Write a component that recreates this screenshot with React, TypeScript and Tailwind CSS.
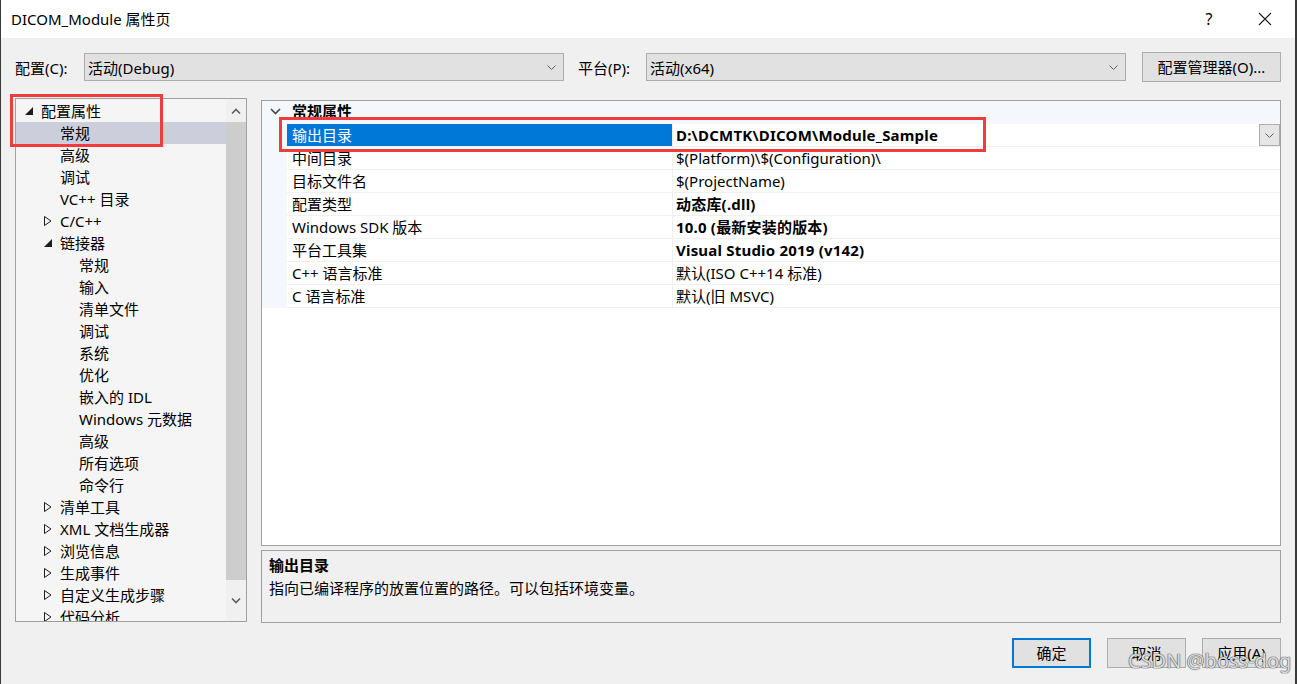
import React from "react";

const FONT = "font-['Noto_Sans','Noto_Sans_CJK_SC',sans-serif]";

function Chevron({ className = "" }: { className?: string }) {
  return (
    <svg width="9" height="5" viewBox="0 0 9 5" className={className}>
      <path d="M0.5 0.5 L4.5 4.5 L8.5 0.5" fill="none" stroke="#606060" strokeWidth="1" />
    </svg>
  );
}

function Expanded() {
  return (
    <svg width="8" height="8" viewBox="0 0 8 8">
      <polygon points="8,0 8,8 0,8" fill="#1e1e1e" />
    </svg>
  );
}

function Collapsed() {
  return (
    <svg width="8" height="10" viewBox="0 0 8 10">
      <polygon points="0.5,0.5 7,5 0.5,9.5" fill="none" stroke="#1e1e1e" strokeWidth="1" />
    </svg>
  );
}

type TreeItem = { label: string; level: 0 | 1 | 2; state?: "open" | "closed"; selected?: boolean };

const tree: TreeItem[] = [
  { label: "配置属性", level: 0, state: "open" },
  { label: "常规", level: 1, selected: true },
  { label: "高级", level: 1 },
  { label: "调试", level: 1 },
  { label: "VC++ 目录", level: 1 },
  { label: "C/C++", level: 1, state: "closed" },
  { label: "链接器", level: 1, state: "open" },
  { label: "常规", level: 2 },
  { label: "输入", level: 2 },
  { label: "清单文件", level: 2 },
  { label: "调试", level: 2 },
  { label: "系统", level: 2 },
  { label: "优化", level: 2 },
  { label: "嵌入的 IDL", level: 2 },
  { label: "Windows 元数据", level: 2 },
  { label: "高级", level: 2 },
  { label: "所有选项", level: 2 },
  { label: "命令行", level: 2 },
  { label: "清单工具", level: 1, state: "closed" },
  { label: "XML 文档生成器", level: 1, state: "closed" },
  { label: "浏览信息", level: 1, state: "closed" },
  { label: "生成事件", level: 1, state: "closed" },
  { label: "自定义生成步骤", level: 1, state: "closed" },
  { label: "代码分析", level: 1, state: "closed" },
];

const padClass: Record<number, string> = { 0: "pl-[9px]", 1: "pl-[28px]", 2: "pl-[47px]" };

type Prop = { name: string; value: string; bold?: boolean; selected?: boolean };
const props: Prop[] = [
  { name: "输出目录", value: "D:\\DCMTK\\DICOM\\Module_Sample", bold: true, selected: true },
  { name: "中间目录", value: "$(Platform)\\$(Configuration)\\" },
  { name: "目标文件名", value: "$(ProjectName)" },
  { name: "配置类型", value: "动态库(.dll)", bold: true },
  { name: "Windows SDK 版本", value: "10.0 (最新安装的版本)", bold: true },
  { name: "平台工具集", value: "Visual Studio 2019 (v142)", bold: true },
  { name: "C++ 语言标准", value: "默认(ISO C++14 标准)" },
  { name: "C 语言标准", value: "默认(旧 MSVC)" },
];

function Combo({ text, width }: { text: string; width: string }) {
  return (
    <div className={`${width} h-[28px] bg-[#e1e1e1] border border-[#adadad] flex items-center pl-[3px] pr-[7px]`}>
      <span className="flex-1 leading-[20px] pt-[1px]">{text}</span>
      <Chevron />
    </div>
  );
}

function Btn({ text, primary }: { text: string; primary?: boolean }) {
  return (
    <div
      className={`w-[79px] h-[30px] bg-[#e1e1e1] flex items-center justify-center ${
        primary ? "border-2 border-[#0078d7]" : "border border-[#adadad]"
      }`}
    >
      <span className="leading-[20px]">{text}</span>
    </div>
  );
}

export default function App() {
  return (
    <div
      className={`${FONT} relative w-[1297px] h-[684px] overflow-hidden bg-[#f0f0f0] border-l border-r-2 border-[#3a3a3a] text-[15px] text-[#000] flex flex-col`}
    >
      {/* Title bar */}
      <div className="h-[38px] bg-white flex items-center pl-[10px] shrink-0">
        <span className="flex-1 leading-[20px]">DICOM_Module 属性页</span>
        <span className="w-[16px] text-center text-[16px] leading-[20px] mr-[41px]">?</span>
        <svg width="14" height="14" viewBox="0 0 14 14" className="mr-[23px]">
          <path d="M1 1 L13 13 M13 1 L1 13" stroke="#1e1e1e" strokeWidth="1.1" />
        </svg>
      </div>

      {/* Config row */}
      <div className="mt-[14px] h-[30px] flex items-center pl-[14px] shrink-0">
        <span className="w-[69px] leading-[20px] pt-[1px]">配置(C):</span>
        <Combo text="活动(Debug)" width="w-[480px]" />
        <span className="w-[68px] ml-[14px] leading-[20px] pt-[1px]">平台(P):</span>
        <Combo text="活动(x64)" width="w-[480px]" />
        <div className="ml-[16px] w-[139px] h-[30px] bg-[#e1e1e1] border border-[#adadad] flex items-center justify-center">
          <span className="leading-[20px]">配置管理器(O)...</span>
        </div>
      </div>

      {/* Content */}
      <div className="mt-[16px] flex pl-[14px] shrink-0">
        {/* Tree */}
        <div className="relative w-[232px] h-[524px] border border-[#a0a0a0] bg-[#f5f5f5] flex">
          <div className="flex-1 pt-[1px] overflow-hidden">
            {tree.map((t, i) => (
              <div
                key={i}
                className={`h-[22px] flex items-center ${padClass[t.level]} ${t.selected ? "bg-[#cccedb]" : ""}`}
              >
                <span className="w-[16px] flex items-center">
                  {t.state === "open" ? <Expanded /> : t.state === "closed" ? <Collapsed /> : null}
                </span>
                <span className="leading-[20px] whitespace-nowrap">{t.label}</span>
              </div>
            ))}
          </div>
          {/* Scrollbar */}
          <div className="w-[20px] bg-[#f0f0f0] flex flex-col">
            <div className="h-[23px] flex items-center justify-center">
              <svg width="10" height="6" viewBox="0 0 10 6">
                <path d="M1 5.5 L5 1.5 L9 5.5" fill="none" stroke="#606060" strokeWidth="1.6" />
              </svg>
            </div>
            <div className="h-[458px] bg-[#cdcdcd]" />
            <div className="flex-1 flex items-center justify-center">
              <svg width="10" height="6" viewBox="0 0 10 6">
                <path d="M1 0.5 L5 4.5 L9 0.5" fill="none" stroke="#606060" strokeWidth="1.6" />
              </svg>
            </div>
          </div>
          {/* annotation */}
          <div className="absolute left-[-6px] top-[-5px] w-[153px] h-[53px] border-[3px] border-[#f03c3c]" />
        </div>

        {/* Right column */}
        <div className="ml-[14px] w-[1020px] flex flex-col">
          <div className="relative mt-[2px] h-[446px] border border-[#a0a0a0] bg-white">
            <div className="h-[23px] bg-[#f4f7fb] flex items-center">
              <span className="w-[25px] flex justify-center pl-[1px] -mt-[2px]">
                <svg width="11" height="7" viewBox="0 0 11 7">
                  <path d="M1 1 L5.5 5.5 L10 1" fill="none" stroke="#444" strokeWidth="1.6" />
                </svg>
              </span>
              <span className="font-bold leading-[20px] pl-[5px] -mt-[3px]">常规属性</span>
            </div>
            {props.map((p, i) => (
              <div key={i} className="h-[23px] flex">
                <div className="w-[25px] bg-[#f4f7fb]" />
                <div className="w-[386px] border-b border-r border-[#f0f0f0] flex items-end">
                  <div
                    className={`w-full h-[22px] flex items-center pl-[5px] ${
                      p.selected ? "bg-[#0078d7] text-white" : ""
                    }`}
                  >
                    <span className="leading-[20px] whitespace-nowrap">{p.name}</span>
                  </div>
                </div>
                <div className="flex-1 border-b border-[#f0f0f0] flex items-center pl-[3px]">
                  <span
                    className={`flex-1 leading-[20px] whitespace-nowrap ${
                      p.bold ? "font-bold tracking-[0.2px]" : ""
                    }`}
                  >
                    {p.value}
                  </span>
                  {p.selected ? (
                    <div className="w-[21px] h-[22px] bg-[#e5e5e5] border border-[#adadad] flex items-center justify-center">
                      <Chevron />
                    </div>
                  ) : null}
                </div>
              </div>
            ))}
            {/* annotation */}
            <div className="absolute left-[17px] top-[16px] w-[707px] h-[35px] border-[3px] border-[#f03c3c]" />
          </div>
          <div className="mt-[4px] h-[73px] border border-[#a0a0a0] bg-[#f0f0f0] pl-[7px] pt-[3px]">
            <div className="h-[22px] flex items-center font-bold leading-[20px]">输出目录</div>
            <div className="h-[24px] flex items-center leading-[20px]">
              指向已编译程序的放置位置的路径。可以包括环境变量。
            </div>
          </div>
        </div>
      </div>

      {/* Buttons */}
      <div className="mt-[15px] h-[30px] flex justify-end gap-[16px] pr-[14px] shrink-0">
        <Btn text="确定" primary />
        <Btn text="取消" />
        <Btn text="应用(A)" />
      </div>

      {/* watermark */}
      <div className="absolute left-[1127px] top-[647px] text-[20px] leading-[28px] text-[rgba(245,245,245,0.85)] [text-shadow:0_0_1px_#555,0_0_1px_#555,0_0_1px_#555] font-['Noto_Sans',sans-serif] whitespace-nowrap">
        CSDN @boss-dog
      </div>
    </div>
  );
}
